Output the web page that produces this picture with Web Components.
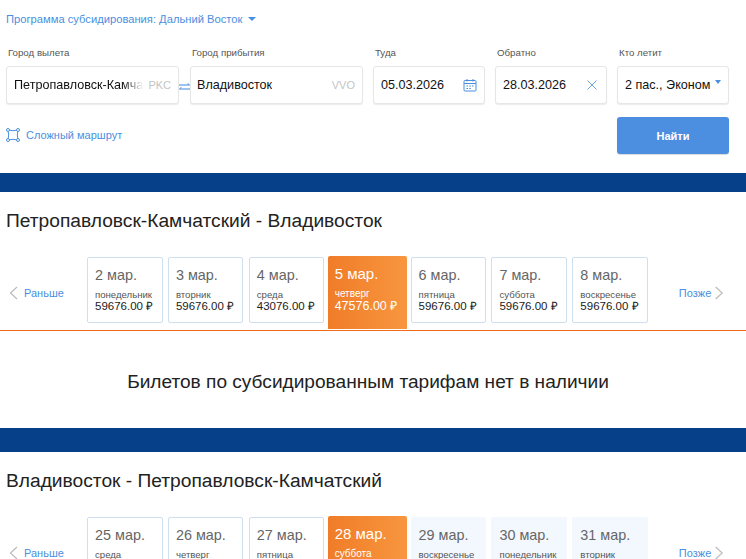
<!DOCTYPE html>
<html lang="ru">
<head>
<meta charset="utf-8">
<title>Субсидированные билеты</title>
<style>
  html, body { margin: 0; height: 559px; overflow: hidden; background: #fff; }
  body { font-family: "Liberation Sans", Arial, sans-serif; color: #111; }
</style>
</head>
<body>
<search-form></search-form>
<blue-band style="--band: 19px"></blue-band>
<route-section title="Петропавловск-Камчатский - Владивосток" days='[
  ["2 мар.","понедельник","59676.00"],["3 мар.","вторник","59676.00"],["4 мар.","среда","43076.00"],
  ["5 мар.","четверг","47576.00","on"],["6 мар.","пятница","59676.00"],["7 мар.","суббота","59676.00"],["8 мар.","воскресенье","59676.00"]]'>
  <no-tickets>Билетов по субсидированным тарифам нет в наличии</no-tickets>
</route-section>
<blue-band style="--band: 24px"></blue-band>
<route-section class="back" title="Владивосток - Петропавловск-Камчатский" days='[
  ["25 мар.","среда","59676.00"],["26 мар.","четверг","59676.00"],["27 мар.","пятница","59676.00"],
  ["28 мар.","суббота","47576.00","on"],["29 мар.","воскресенье","","none"],["30 мар.","понедельник","","none"],["31 мар.","вторник","","none"]]'></route-section>

<script>
// small field wrapper: label above, white box below
class FieldBox extends HTMLElement {
  constructor() {
    super();
    this.attachShadow({ mode: 'open' }).innerHTML = `
      <style>
        :host { display: block; }
        .label { font-size: 9.7px; line-height: 12px; color: #555; padding: 0 2px; height: 19px; white-space: nowrap; }
        .box {
          box-sizing: border-box; height: 38px; display: flex; align-items: center;
          padding: 0 7px; border: 1px solid #e6e6e6; border-radius: 3px;
          box-shadow: 0 1px 1px rgba(0,0,0,.08);
          font-size: 12.6px; color: #111; background: #fff; overflow: hidden;
        }
        ::slotted([slot=end]) { margin-left: auto; flex: none; }
      </style>
      <div class="label">${this.getAttribute('label')}</div>
      <div class="box"><slot></slot><slot name="end"></slot></div>`;
  }
}

class SearchForm extends HTMLElement {
  constructor() {
    super();
    this.attachShadow({ mode: 'open' }).innerHTML = `
      <style>
        :host { display: block; height: 173px; box-sizing: border-box; padding: 12px 17px 0 6px; }
        .program { display: flex; align-items: center; height: 14px; font-size: 11.2px; color: #4a8fe0; gap: 6px; margin: 0 0 21px; }
        .caret { width: 0; height: 0; border: 4px solid transparent; border-top: 4px solid #4a8fe0; border-bottom: 0; }
        .fields { display: grid; grid-template-columns: 173px 174px 112px 112px 112px; column-gap: 10px; position: relative; }
        .fields > :nth-child(2) { margin-left: 1px; }
        .name { white-space: nowrap; overflow: hidden; flex: 0 1 auto; position: relative; }
        .cut { width: 129px; -webkit-mask-image: linear-gradient(90deg, #000 85%, transparent); mask-image: linear-gradient(90deg, #000 85%, transparent); }
        .shift { margin-left: -1px; }
        .code { color: #c4c4c4; font-size: 11px; }
        .swap { position: absolute; left: 173px; top: 36px; width: 11px; height: 8px; }
        .pax-caret { width: 0; height: 0; border: 3.5px solid transparent; border-top: 4px solid #4a8fe0; border-bottom: 0; margin-bottom: 6px; }
        .bottom { display: flex; justify-content: space-between; margin-top: 13px; }
        .complex { display: flex; align-items: center; gap: 6px; font-size: 11px; color: #4a8fe0; height: 12px; margin-top: 12px; }
        .find {
          width: 112px; height: 37px; border: 0; border-radius: 3px; padding: 0; background: #4c8fe0;
          color: #fff; font: bold 11px "Liberation Sans", Arial, sans-serif;
          box-shadow: 0 1px 1px rgba(0,0,0,.15);
        }
      </style>
      <div class="program">Программа субсидирования: Дальний Восток <span class="caret"></span></div>
      <div class="fields">
        <field-box label="Город вылета">
          <span class="name cut">Петропавловск-Камчатский</span>
          <span class="code" slot="end">PKC</span>
        </field-box>
        <field-box label="Город прибытия">
          <span class="name shift">Владивосток</span>
          <span class="code" slot="end">VVO</span>
        </field-box>
        <field-box label="Туда">
          <span>05.03.2026</span>
          <svg slot="end" width="14" height="14" viewBox="0 0 14 14" fill="none" stroke="#4a8fe0">
            <rect x="1" y="2.5" width="12" height="10.5" rx="1"/>
            <path d="M1 5.5h12M4 1v2.5M10 1v2.5"/>
            <path d="M3.5 8h1.5M6.3 8h1.5M9 8h1.5M3.5 10.5h1.5M6.3 10.5h1.5" stroke-width="1.2"/>
          </svg>
        </field-box>
        <field-box label="Обратно">
          <span>28.03.2026</span>
          <svg slot="end" width="10" height="10" viewBox="0 0 10 10" stroke="#6ba3e6" style="margin-right:2px">
            <path d="M.5.5l9 9M9.5.5l-9 9"/>
          </svg>
        </field-box>
        <field-box label="Кто летит">
          <span style="white-space:nowrap">2 пас., Эконом</span>
          <span class="pax-caret" slot="end"></span>
        </field-box>
        <svg class="swap" viewBox="0 0 11 8" fill="none" stroke="#3f88de">
          <path d="M0 2h10.5M8.5 .2L10.5 2M11 6H.5M2.5 4.2L.5 6"/>
        </svg>
      </div>
      <div class="bottom">
        <div class="complex">
          <svg width="14" height="14" viewBox="0 0 14 14" fill="none" stroke="#4a8fe0">
            <path d="M3.5 2.2Q7 3.2 10.5 2.2M3.5 11.8Q7 10.8 10.5 11.8M2.2 3.5Q3.2 7 2.2 10.5M11.8 3.5Q10.8 7 11.8 10.5"/>
            <circle cx="2" cy="2" r="1.5"/><circle cx="12" cy="2" r="1.5"/>
            <circle cx="2" cy="12" r="1.5"/><circle cx="12" cy="12" r="1.5"/>
          </svg>
          Сложный маршрут
        </div>
        <button class="find">Найти</button>
      </div>`;
  }
}

class BlueBand extends HTMLElement {
  constructor() {
    super();
    this.attachShadow({ mode: 'open' }).innerHTML = `
      <style>:host { display: block; height: var(--band, 19px); background: #064088; }</style>`;
  }
}

class DayCard extends HTMLElement {
  constructor() {
    super();
    const d = this.getAttribute('date'), w = this.getAttribute('weekday'), p = this.getAttribute('price');
    this.attachShadow({ mode: 'open' }).innerHTML = `
      <style>
        :host {
          display: block; box-sizing: border-box; height: 66px; padding: 9px 7px 0;
          border: 1px solid #cfdff0; border-radius: 2px; background: #fff; color: #222;
        }
        :host([state=none]) { border-color: #f3f8fe; background: #f3f8fe; }
        :host([state=on]) {
          border: 0; border-radius: 2px 2px 0 0; height: 73px; margin: -1px -1.5px 0 -2px; padding: 9px 7px 0;
          background: linear-gradient(90deg, #f07c28, #f8963f); color: #fff;
        }
        .date { font-size: 14.4px; line-height: 17px; color: #666; margin-bottom: 5px; white-space: nowrap; }
        .day { font-size: 9.6px; line-height: 11px; color: #555; white-space: nowrap; }
        .price { font-size: 11.5px; line-height: 13px; white-space: nowrap; }
        :host([state=on]) .date { font-size: 15px; margin-bottom: 6px; }
        :host([state=on]) .day { font-size: 10px; }
        :host([state=on]) .price { font-size: 12.5px; margin-top: 1px; }
        :host([state=on]) .date, :host([state=on]) .day { color: #fff; }
      </style>
      <div class="date">${d}</div>
      <div class="day">${w}</div>
      ${p ? `<div class="price">${p} ₽</div>` : ''}`;
  }
}

class RouteSection extends HTMLElement {
  constructor() {
    super();
    const days = JSON.parse(this.getAttribute('days'));
    const cards = days.map(([d, w, p, s]) =>
      `<day-card date="${d}" weekday="${w}" price="${p}" ${s ? `state="${s}"` : ''}></day-card>`).join('');
    this.attachShadow({ mode: 'open' }).innerHTML = `
      <style>
        :host { display: block; }
        h2 { margin: 0; padding: 18px 0 0 6px; height: 47px; box-sizing: border-box; font-size: 19.2px; line-height: 22px; font-weight: 400; color: #222; }
        .strip { display: flex; align-items: flex-start; height: 72.5px; margin-top: 18px; border-bottom: 1.5px solid #f26a1c; }
        .nav { display: flex; align-items: center; gap: 4px; height: 14px; margin-top: 29px; font-size: 11px; color: #4a8fe0; flex: none; }
        .prev { width: 87px; padding-left: 9px; box-sizing: border-box; }
        .next { padding-left: 31px; }
        .days { display: grid; grid-template-columns: repeat(7, 75.5px); column-gap: 5.4px; flex: none; }
        svg { flex: none; }
      </style>
      <h2>${this.getAttribute('title')}</h2>
      <div class="strip">
        <div class="nav prev">
          <svg width="11" height="14" viewBox="0 0 11 14" fill="none" stroke="#bbb" stroke-width="1.2"><path d="M8 1L1.5 7 8 13"/></svg>
          Раньше
        </div>
        <div class="days">${cards}</div>
        <div class="nav next">
          Позже
          <svg width="9" height="14" viewBox="0 0 9 14" fill="none" stroke="#bbb" stroke-width="1.2"><path d="M.7 1l6.5 6-6.5 6"/></svg>
        </div>
      </div>
      <slot></slot>`;
  }
}

class NoTickets extends HTMLElement {
  constructor() {
    super();
    this.attachShadow({ mode: 'open' }).innerHTML = `
      <style>
        :host { display: block; height: 97px; box-sizing: border-box; padding: 40px 10px 0 0; text-align: center; font-size: 19.1px; line-height: 22px; color: #222; }
      </style><slot></slot>`;
  }
}

customElements.define('field-box', FieldBox);
customElements.define('search-form', SearchForm);
customElements.define('blue-band', BlueBand);
customElements.define('day-card', DayCard);
customElements.define('route-section', RouteSection);
customElements.define('no-tickets', NoTickets);
</script>
</body>
</html>
